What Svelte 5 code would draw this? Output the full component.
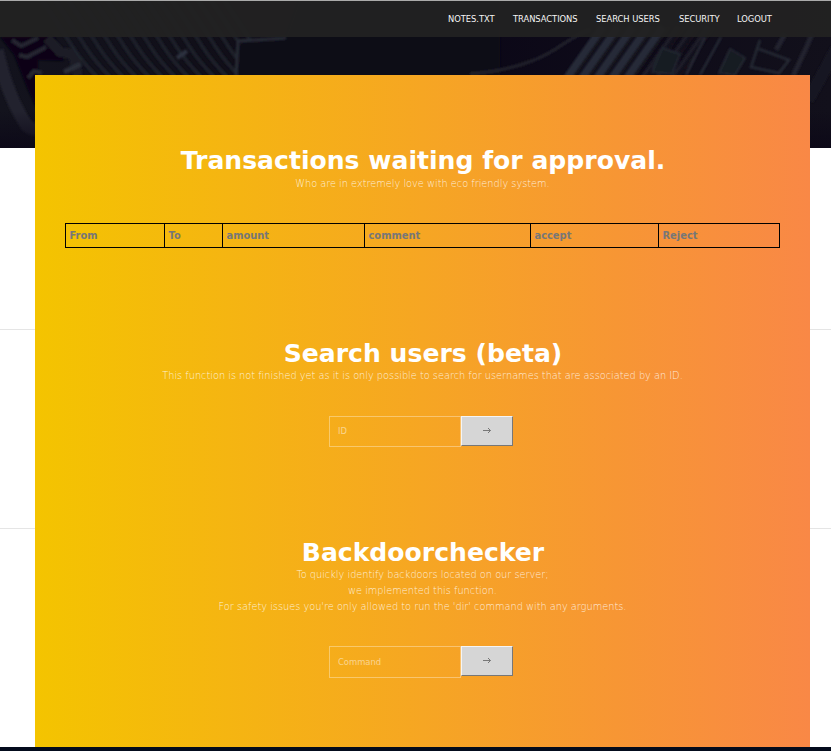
<script>
  const links = [
    { label: 'NOTES.TXT', width: 47 },
    { label: 'TRANSACTIONS', width: 65 },
    { label: 'SEARCH USERS', width: 65 },
    { label: 'SECURITY', width: 40 },
    { label: 'LOGOUT', width: 36 }
  ];
  const columns = [
    { label: 'From', width: 99 },
    { label: 'To', width: 58 },
    { label: 'amount', width: 142 },
    { label: 'comment', width: 166 },
    { label: 'accept', width: 128 },
    { label: 'Reject', width: 121 }
  ];
  const ribs = Array.from({ length: 15 }, (_, i) => 62 + i * 13);
  const fins = Array.from({ length: 8 }, (_, i) => 585 + i * 15);
</script>

{#snippet arrow()}
  <svg width="8" height="7" viewBox="0 0 8 7" fill="none" stroke="#777" stroke-width="1">
    <path d="M0 3.5H7.5M5 1L7.5 3.5L5 6" />
  </svg>
{/snippet}

<div class="page">
  <div class="backdrop">
    <svg class="photo" width="831" height="148" viewBox="0 0 831 148">
      <defs>
        <linearGradient id="base"><stop offset="0" stop-color="#13131d" /><stop offset=".35" stop-color="#100d17" /><stop offset=".55" stop-color="#0b0717" /><stop offset="1" stop-color="#12101b" /></linearGradient>
        <linearGradient id="shade" x2="0" y2="1"><stop offset=".75" stop-color="#0b0717" stop-opacity="0" /><stop offset="1" stop-color="#0b0717" stop-opacity=".8" /></linearGradient>
        <filter id="soft"><feGaussianBlur stdDeviation=".9" /></filter>
      </defs>
      <rect width="831" height="148" fill="url(#base)" />
      <g filter="url(#soft)" fill="none">
        <path d="M-3 50Q8 98 27 126Q33 131 42 128" stroke="#22232e" stroke-width="13" />
        <path d="M0 37L14 55L27 88L38 112V60L64 61L55 37Z" fill="#070414" />
        <path d="M12 40L21 46L38 38M19 55L27 57L46 47M28 78L34 71L42 73" stroke="#272833" stroke-width="4" />
        <path d="M47 38L60 52L73 54L78 76" stroke="#1b1c25" stroke-width="10" />
        {#each ribs as x}
          <path d="M{x - 20} 0Q{x} 30 {x + 10} 46T{x + 38} 80" stroke="#1f202b" stroke-width="3.5" />
        {/each}
        <path d="M177 58L187 51" stroke="#2d333f" stroke-width="4" />
        <path d="M64 72L81 64" stroke="#2b2d38" stroke-width="5" />
        <path d="M236 76L238 41L286 38L300 0H500V76" fill="#0d0918" />
        <path d="M236 76L238 41L286 38" stroke="#262935" stroke-width="3" />
        <path d="M470 74Q525 69 554 50T590 30" stroke="#24242c" stroke-width="3" />
        {#each fins as x, i}
          <path d="M{x - 18} 78L{x + 18} 27" stroke={i < 5 ? '#252a38' : '#1d1b26'} stroke-width={i < 5 ? 8 : 4} />
          <path d="M{x - 12} 78L{x + 24} 27" stroke="#15121b" stroke-width="3" />
        {/each}
        <path d="M652 72L662 48L680 54L672 74ZM719 73L730 49L745 58L735 75Z" fill="#191a22" stroke="#222630" stroke-width="2" />
        <path d="M760 40L751 67L779 73L789 60L759 49M700 75L721 37M686 75L705 37" stroke="#252934" stroke-width="2.5" />
        <path d="M776 50L785 34M793 76L807 46L812 34" stroke="#22232f" stroke-width="5" />
        <path d="M808 100Q823 74 836 49" stroke="#181823" stroke-width="12" />
      </g>
      <rect width="831" height="148" fill="url(#shade)" />
    </svg>
    <div class="rule first"></div>
    <div class="rule second"></div>
  </div>

  <div class="content">
    <nav>
      {#each links as link}
        <a href="#top" style="width: {link.width}px">{link.label}</a>
      {/each}
    </nav>

    <main>
      <section class="transactions">
        <h1>Transactions waiting for approval.</h1>
        <p>Who are in extremely love with eco friendly system.</p>
        <table>
          <thead>
            <tr>
              {#each columns as column}
                <th style="width: {column.width}px">{column.label}</th>
              {/each}
            </tr>
          </thead>
        </table>
      </section>

      <section class="search">
        <h1>Search users (beta)</h1>
        <p>This function is not finished yet as it is only possible to search for usernames that are associated by an ID.</p>
        <form>
          <input placeholder="ID" aria-label="ID" />
          <button type="button" aria-label="Search">{@render arrow()}</button>
        </form>
      </section>

      <section class="checker">
        <h1>Backdoorchecker</h1>
        <p>To quickly identify backdoors located on our server;<br />we implemented this function.<br />For safety issues you're only allowed to run the 'dir' command with any arguments.</p>
        <form class="tall">
          <input placeholder="Command" aria-label="Command" />
          <button type="button" aria-label="Run">{@render arrow()}</button>
        </form>
      </section>
    </main>
    <footer></footer>
  </div>
</div>

<style>
  :global(body) { margin: 0; background: #fff; }
  .page { display: grid; width: 831px; height: 751px; overflow: hidden; font-family: "DejaVu Sans", sans-serif; }
  .backdrop, .content { grid-area: 1 / 1; min-width: 0; }
  .photo { display: block; }
  .rule { height: 1px; background: #e5e5e5; }
  .first { margin-top: 181px; }
  .second { margin-top: 198px; }
  .content { display: flex; flex-direction: column; z-index: 1; }
  nav { display: flex; justify-content: flex-end; align-items: center; gap: 18px; box-sizing: border-box; height: 37px; padding-right: 58px; border-top: 1px solid #aaa; background: rgba(34, 34, 34, .94); }
  nav a { color: #f4f4f4; font: 8.4px/14px "DejaVu Sans", sans-serif; letter-spacing: -.06px; text-decoration: none; white-space: nowrap; }
  main { box-sizing: border-box; width: 775px; height: 672px; margin: 38px 21px 0 35px; padding: 0 30px; background: linear-gradient(90deg, #f4c400, #f6a623 50%, #f79634 75%, #f98846); }
  section { display: flex; flex-direction: column; align-items: center; box-sizing: border-box; }
  .transactions { height: 254px; padding-top: 71px; }
  .search { height: 199px; padding-top: 10px; }
  .checker { padding-top: 10px; }
  h1 { margin: 0; padding-left: 1px; color: #fff; font-size: 25.1px; line-height: 30px; font-weight: 700; white-space: nowrap; }
  p { margin: 0; color: rgba(255, 255, 255, .82); font: 200 9.8px/16px "DejaVu Sans", sans-serif; letter-spacing: -.02px; text-align: center; white-space: nowrap; }
  .search p, .checker p { margin: -1px 0 1px; }
  table { width: 715px; height: 25px; margin-top: 31px; border-collapse: collapse; table-layout: fixed; }
  th { box-sizing: border-box; height: 24px; padding: 0 4px 0 3.5px; border: 1px solid #000; color: #777; font: bold 9.9px/16px "DejaVu Sans", sans-serif; text-align: left; }
  form { display: flex; align-items: flex-start; width: 184px; height: 31px; margin: 31px 3px 0 0; }
  .tall { height: 32px; margin-top: 30px; }
  input { box-sizing: border-box; width: 132px; height: 100%; padding: 0 8px; border: 1px solid rgba(255, 255, 255, .35); border-radius: 0; background: transparent; color: #fff; font: 8.4px "DejaVu Sans", sans-serif; }
  .search input { padding-bottom: 2px; }
  input::placeholder { color: rgba(255, 255, 255, .5); opacity: 1; }
  button { display: flex; align-items: center; justify-content: center; box-sizing: border-box; width: 52px; height: 30px; padding: 0 0 1px; border: 1px solid; border-color: #f5f5f5 #777 #777 #f5f5f5; background: #d6d6d6; }
  footer { height: 4px; background: #030b1c; }
</style>
